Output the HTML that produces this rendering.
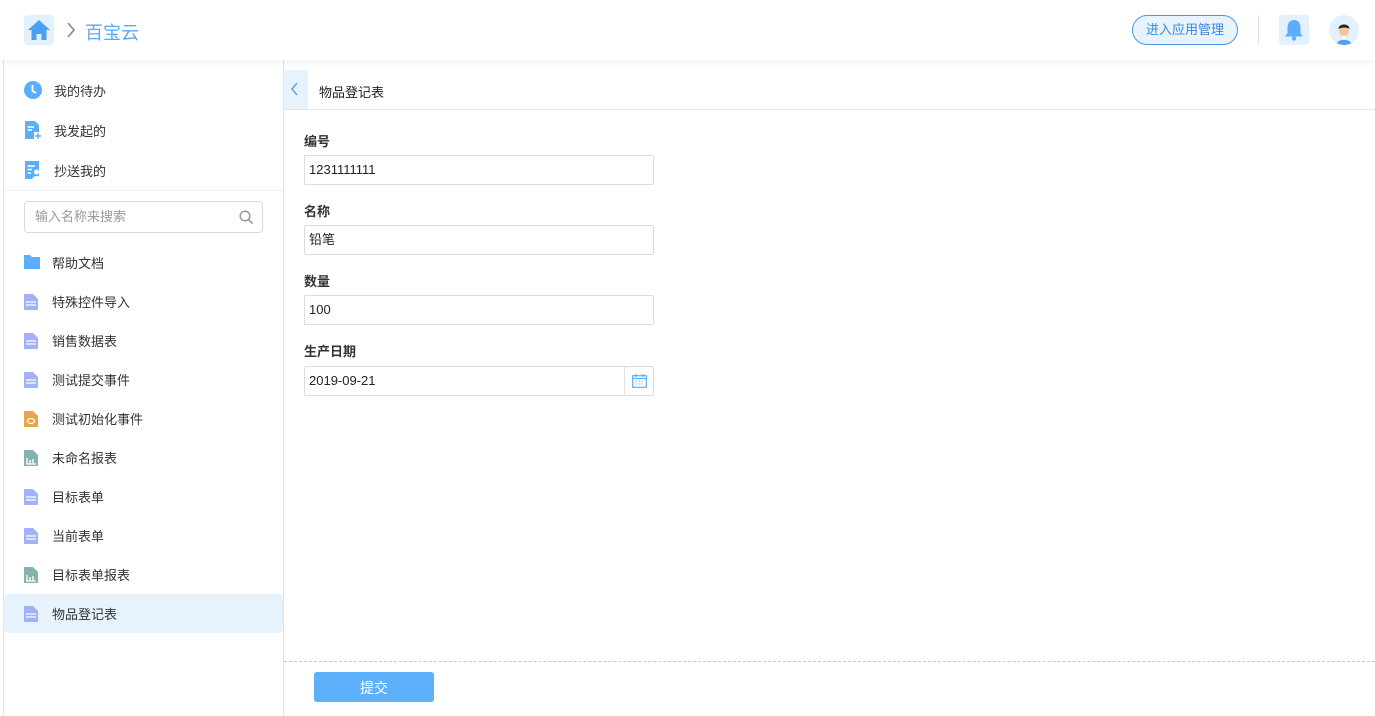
<!DOCTYPE html>
<html><head><meta charset="utf-8"><style>
*{margin:0;padding:0;box-sizing:border-box}
body{width:1375px;height:716px;background:#fff;font-family:"Liberation Sans","Noto Sans CJK SC",sans-serif;color:#333;position:relative;overflow:hidden}
.hdr{position:absolute;left:0;top:0;width:1375px;height:60px;background:#fff;box-shadow:0 2px 6px rgba(0,0,0,.06);z-index:2}
.home{position:absolute;left:24px;top:15px;width:30px;height:30px;background:#e3f1ff;border-radius:4px}
.crumb{position:absolute;left:85px;top:19px;font-size:18px;color:#5aa9f5}
.btn-app{position:absolute;left:1132px;top:15px;width:106px;height:30px;border:1px solid #4d97e0;border-radius:15px;background:#e7f3ff;color:#3e86d6;font-size:13px;line-height:28px;text-align:center}
.vsep{position:absolute;left:1258px;top:15px;width:1px;height:30px;background:#dbe6f2}
.bell{position:absolute;left:1279px;top:15px;width:30px;height:30px;background:#e3f1ff;border-radius:3px}
.av{position:absolute;left:1329px;top:15px;width:30px;height:30px;background:#e3f1ff;border-radius:50%;overflow:hidden}
.lline{position:absolute;left:3px;top:60px;width:1px;height:656px;background:#e6e6e6}
.side{position:absolute;left:4px;top:60px;width:280px;height:656px;border-right:1px solid #e3e3e3}
.top3 div{position:absolute;left:20px;font-size:13px;color:#333;height:20px;line-height:20px}
.top3 div b{position:absolute;left:30px;top:1px;font-weight:normal;white-space:nowrap}
.hsep{position:absolute;left:0;top:130px;width:279px;height:1px;background:#eee}
.search{position:absolute;left:20px;top:141px;width:239px;height:32px;border:1px solid #d9d9d9;border-radius:4px;font-size:13px;color:#999;line-height:30px;padding-left:10px}
.item{position:absolute;left:0;width:279px;height:39px;font-size:13px;line-height:41px;color:#333}
.item svg{position:absolute;left:20px;top:12px}
.item span{position:absolute;left:48px}
.item.act{background:#e6f3fd;border-radius:4px}
.main{position:absolute;left:284px;top:60px;width:1091px;height:656px}
.tab{position:absolute;left:0;top:10px;width:24px;height:39px;background:#e6f3fd;border-radius:0 3px 0 0}
.ttl{position:absolute;left:35px;top:22px;font-size:13px;color:#222}
.tline{position:absolute;left:0;top:49px;width:1091px;height:1px;background:#e3e3e3}
.lbl{position:absolute;left:20px;font-size:13px;font-weight:bold;color:#333}
.inp{position:absolute;left:20px;width:350px;height:30px;border:1px solid #dcdcdc;border-radius:2px;font-size:13px;line-height:28px;padding-left:4px;color:#222}
.dash{position:absolute;left:0;top:601px;width:1091px;border-top:1px dashed #c8c8c8}
.sub{position:absolute;left:30px;top:612px;width:120px;height:30px;background:#5db1fb;border-radius:3px;color:#fff;font-size:14px;line-height:32px;text-align:center}
</style></head><body>
<div class="hdr">
 <div class="home"><svg width="30" height="30" viewBox="0 0 30 30"><path d="M15 5 L4 15 H7.5 V25 H12.5 V19 H17.5 V25 H22.5 V15 H26 Z" fill="#4a9ff2"/></svg></div>
 <svg style="position:absolute;left:66px;top:22px" width="10" height="16" viewBox="0 0 10 16"><path d="M2 1 L8 8 L2 15" stroke="#888" stroke-width="1.6" fill="none"/></svg>
 <div class="crumb">百宝云</div>
 <div class="btn-app">进入应用管理</div>
 <div class="vsep"></div>
 <div class="bell"><svg width="30" height="30" viewBox="0 0 30 30"><path d="M15 5 C10 5 8.5 9 8.5 13 V18 L6 21.5 H24 L21.5 18 V13 C21.5 9 20 5 15 5Z" fill="#5aaefc"/><circle cx="15" cy="23.5" r="2.2" fill="#5aaefc"/></svg></div>
 <div class="av"><svg width="30" height="30" viewBox="0 0 30 30"><path d="M7 30 C8 23 22 23 23 30Z" fill="#4fa2ea"/><ellipse cx="15" cy="16" rx="5" ry="6" fill="#f6c79e"/><path d="M9.5 14 C9.5 8 20.5 8 20.5 14 C18 12 13 12 9.5 14Z" fill="#222"/><path d="M13 21 L15 25 L17 21Z" fill="#fff"/></svg></div>
</div>
<div class="lline"></div>
<div class="side">
 <div class="top3">
  <div style="top:21px"><svg width="18" height="18" viewBox="0 0 18 18"><circle cx="9" cy="9" r="9" fill="#5aaefc"/><path d="M8.5 4 V10 L12 12" stroke="#fff" stroke-width="1.8" fill="none"/></svg><b>我的待办</b></div>
  <div style="top:61px"><svg width="18" height="18" viewBox="0 0 18 18"><path d="M1 0 H11 L15 4 V18 H1Z" fill="#5aaefc"/><path d="M3.5 6 H10 M3.5 9 H8" stroke="#fff" stroke-width="1.5"/><rect x="10" y="11" width="8" height="7" fill="#fff"/><path d="M14 12 V18 M11 15 H17" stroke="#5aaefc" stroke-width="1.4"/></svg><b>我发起的</b></div>
  <div style="top:101px"><svg width="18" height="18" viewBox="0 0 18 18"><path d="M1 0 H15 V18 H1Z" fill="#5aaefc"/><path d="M3.5 5 H11 M3.5 8.5 H8 M3.5 12 H7" stroke="#fff" stroke-width="1.5"/><circle cx="12.5" cy="11" r="2.5" fill="#fff"/><path d="M8.5 18 C9 14 16 14 16.5 18Z" fill="#fff"/></svg><b>抄送我的</b></div>
 </div>
 <div class="hsep"></div>
 <div class="search">输入名称来搜索<svg style="position:absolute;right:8px;top:8px" width="15" height="15" viewBox="0 0 15 15"><circle cx="6" cy="6" r="4.8" stroke="#999" stroke-width="1.5" fill="none"/><path d="M9.5 9.5 L13.5 13.5" stroke="#999" stroke-width="1.6"/></svg></div>

 <div class="item" style="top:183px"><svg width="16" height="14" viewBox="0 0 16 14"><path d="M0 0 H6 L8 2 H16 V14 H0Z" fill="#5aaefc"/></svg><span>帮助文档</span></div>
 <div class="item" style="top:222px"><svg width="14" height="16" viewBox="0 0 14 16"><path d="M0 0 H9 L14 5 V16 H0Z" fill="#a3b0fb"/><path d="M2 8 H12 M2 11 H12" stroke="#fff" stroke-width="1.3"/></svg><span>特殊控件导入</span></div>
 <div class="item" style="top:261px"><svg width="14" height="16" viewBox="0 0 14 16"><path d="M0 0 H9 L14 5 V16 H0Z" fill="#a3b0fb"/><path d="M2 8 H12 M2 11 H12" stroke="#fff" stroke-width="1.3"/></svg><span>销售数据表</span></div>
 <div class="item" style="top:300px"><svg width="14" height="16" viewBox="0 0 14 16"><path d="M0 0 H9 L14 5 V16 H0Z" fill="#a3b0fb"/><path d="M2 8 H12 M2 11 H12" stroke="#fff" stroke-width="1.3"/></svg><span>测试提交事件</span></div>
 <div class="item" style="top:339px"><svg width="14" height="16" viewBox="0 0 14 16"><path d="M0 0 H9 L14 5 V16 H0Z" fill="#e9a44c"/><ellipse cx="7" cy="10" rx="3.5" ry="2.5" stroke="#fff" stroke-width="1.2" fill="none"/></svg><span>测试初始化事件</span></div>
 <div class="item" style="top:378px"><svg width="14" height="16" viewBox="0 0 14 16"><path d="M0 0 H9 L14 5 V16 H0Z" fill="#86b3ad"/><path d="M3 14 V8 M6 14 V10 M9 14 V9 M2 14 H12" stroke="#fff" stroke-width="1.3"/></svg><span>未命名报表</span></div>
 <div class="item" style="top:417px"><svg width="14" height="16" viewBox="0 0 14 16"><path d="M0 0 H9 L14 5 V16 H0Z" fill="#a3b0fb"/><path d="M2 8 H12 M2 11 H12" stroke="#fff" stroke-width="1.3"/></svg><span>目标表单</span></div>
 <div class="item" style="top:456px"><svg width="14" height="16" viewBox="0 0 14 16"><path d="M0 0 H9 L14 5 V16 H0Z" fill="#a3b0fb"/><path d="M2 8 H12 M2 11 H12" stroke="#fff" stroke-width="1.3"/></svg><span>当前表单</span></div>
 <div class="item" style="top:495px"><svg width="14" height="16" viewBox="0 0 14 16"><path d="M0 0 H9 L14 5 V16 H0Z" fill="#86b3ad"/><path d="M3 14 V8 M6 14 V10 M9 14 V9 M2 14 H12" stroke="#fff" stroke-width="1.3"/></svg><span>目标表单报表</span></div>
 <div class="item act" style="top:534px"><svg width="14" height="16" viewBox="0 0 14 16"><path d="M0 0 H9 L14 5 V16 H0Z" fill="#a3b0fb"/><path d="M2 8 H12 M2 11 H12" stroke="#fff" stroke-width="1.3"/></svg><span>物品登记表</span></div>
</div>
<div class="main">
 <div class="tab"><svg width="24" height="39" viewBox="0 0 24 39"><path d="M13 13 L8 19 L13 25" stroke="#5a8fc6" stroke-width="1.3" fill="none"/></svg></div>
 <div class="ttl">物品登记表</div>
 <div class="tline"></div>
 <div class="lbl" style="top:71px">编号</div>
 <div class="inp" style="top:95px">1231111111</div>
 <div class="lbl" style="top:141px">名称</div>
 <div class="inp" style="top:165px">铅笔</div>
 <div class="lbl" style="top:211px">数量</div>
 <div class="inp" style="top:235px">100</div>
 <div class="lbl" style="top:281px">生产日期</div>
 <div class="inp" style="top:306px">2019-09-21<div style="position:absolute;right:0;top:0;width:29px;height:28px;border-left:1px solid #e3e3e3"><svg style="position:absolute;left:7px;top:7px" width="15" height="14" viewBox="0 0 15 14"><rect x="0.7" y="1.7" width="13.6" height="11.6" stroke="#5aaefc" stroke-width="1.2" fill="none"/><path d="M1 4.5 H14" stroke="#5aaefc" stroke-width="1.2"/><path d="M4 0 V3 M11 0 V3" stroke="#5aaefc" stroke-width="1.2"/><path d="M3.5 7 h1 M6.5 7 h1 M9.5 7 h1 M3.5 10 h1 M6.5 10 h1 M9.5 10 h1" stroke="#5aaefc" stroke-width="1.2"/></svg></div></div>
 <div class="dash"></div>
 <div class="sub">提交</div>
</div>
</body></html>
